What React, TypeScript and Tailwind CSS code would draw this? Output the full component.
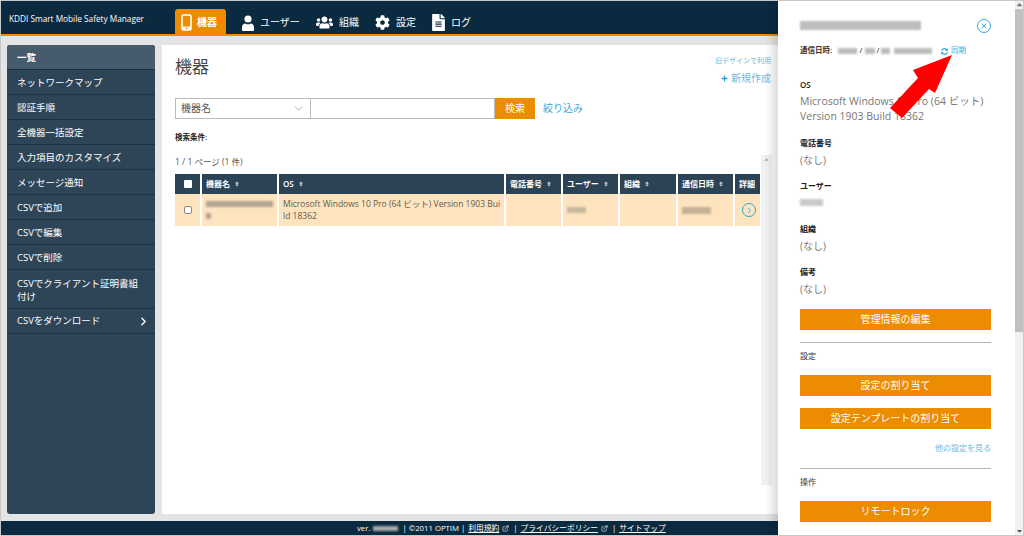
import { FaCog, FaFileAlt, FaUsers, FaPlus, FaSyncAlt, FaCaretUp, FaCaretDown, FaSort } from "react-icons/fa";
import { ChevronDown, ChevronRight, ExternalLink, X } from "lucide-react";

const font = "font-['Open_Sans','Noto_Sans_CJK_JP',sans-serif]";

const menu = [
  "ネットワークマップ",
  "認証手順",
  "全機器一括設定",
  "入力項目のカスタマイズ",
  "メッセージ通知",
  "CSVで追加",
  "CSVで編集",
  "CSVで削除",
];

function Blur({ className }: { className: string }) {
  return <div className={`blur-[1px] ${className}`} />;
}

function NavItem({ icon, label, className }: { icon: React.ReactNode; label: string; className: string }) {
  return (
    <div className={`flex items-center text-[10px] text-white ${className}`}>
      {icon}
      <span>{label}</span>
    </div>
  );
}

function Th({ label, w, sort = true }: { label: string; w: string; sort?: boolean }) {
  return (
    <th className={`${w} border-r-2 border-white pl-1 text-left text-[8px] font-semibold text-white last:border-r-0`}>
      <span className="flex items-center gap-1">
        {label}
        {sort && <FaSort className="size-[6px] text-[#d5dde3]" />}
      </span>
    </th>
  );
}

function Field({ label, value, blur }: { label: string; value?: string; blur?: boolean }) {
  return (
    <div className="mb-[11px] h-[32px]">
      <div className="h-[15px] text-[8px] leading-[15px] font-semibold text-[#222]">{label}</div>
      {blur ? (
        <Blur className="mt-[6px] h-[7px] w-[23px] bg-[#c9c9c9]" />
      ) : (
        <div className="mt-[2px] text-[10px] leading-[16px] text-[#777]">{value}</div>
      )}
    </div>
  );
}

function OrangeButton({ label, className }: { label: string; className: string }) {
  return (
    <div className={`flex h-[21px] items-center justify-center bg-[#ec8c00] text-[10px] text-white ${className}`}>
      {label}
    </div>
  );
}

export default function App() {
  return (
    <div className={`relative flex h-[536px] w-[1024px] overflow-hidden bg-[#e4e4e4] ${font}`}>
      <div className="flex w-[778px] shrink-0 flex-col">
        {/* header */}
        <header className="flex h-[36px] shrink-0 items-end border-b-2 border-[#ec8c00] bg-[#0a2a40] pl-[9px]">
          <div className="mb-[9px] w-[166px] text-[8.25px] text-white">KDDI Smart Mobile Safety Manager</div>
          <div className="flex h-[25px] w-[51px] items-center gap-[5px] rounded-t-[3px] bg-[#ec8c00] pt-[2px] pl-[6px] text-[10px] font-semibold text-white">
            <svg width="11" height="17" viewBox="0 0 11 17">
              <rect x="1" y="1" width="9" height="15" rx="1.5" fill="none" stroke="#fff" strokeWidth="1.6" />
              <rect x="1" y="12.5" width="9" height="3.5" fill="#fff" />
              <circle cx="5.5" cy="14.2" r="0.9" fill="#ec8c00" />
            </svg>
            機器
          </div>
          <div className="flex h-[26px] items-center pt-[3px] pl-[16px]">
            <NavItem
              className="w-[74px]"
              label="ユーザー"
              icon={
                <svg className="mr-[6px]" width="12" height="16" viewBox="0 0 12 16" fill="#fff">
                  <circle cx="6" cy="4" r="3.6" />
                  <path d="M0 15c0 .6.4 1 1 1h10c.6 0 1-.4 1-1v-3c0-2-1.6-3.6-3.4-3.6-.8.6-1.7.9-2.6.9s-1.8-.3-2.6-.9C1.6 8.4 0 10 0 12z" />
                </svg>
              }
            />
            <NavItem className="w-[59px]" label="組織" icon={<FaUsers className="mr-[6px] size-[17px]" />} />
            <NavItem className="w-[57px]" label="設定" icon={<FaCog className="mr-[6px] size-[15px]" />} />
            <NavItem className="w-[50px]" label="ログ" icon={<FaFileAlt className="mr-[6px] h-[17px] w-[13px]" />} />
          </div>
        </header>

        <div className="flex min-h-0 flex-1 gap-[7px] pt-[9px] pb-[7px] pl-[7px]">
          {/* sidebar */}
          <nav className="w-[148px] shrink-0 rounded-[3px] bg-[#2e4558] text-[9.5px] text-white">
            <div className="flex h-[25px] items-center rounded-t-[3px] border-b border-[#1c3244] bg-[#465c6d] pt-[2px] pl-[10px] font-semibold">一覧</div>
            {menu.map((m) => (
              <div key={m} className="flex h-[25px] items-center border-b border-[#1c3244] pt-[2px] pl-[10px]">{m}</div>
            ))}
            <div className="flex h-[39px] items-center border-b border-[#1c3244] pt-[2px] pr-3 pl-[10px] leading-[13px]">CSVでクライアント証明書組付け</div>
            <div className="flex h-[25px] items-center justify-between border-b border-[#1c3244] pr-[5px] pl-[10px]">
              CSVをダウンロード
              <ChevronRight className="size-[13px]" strokeWidth={2.5} />
            </div>
          </nav>

          {/* main */}
          <main className="flex min-w-0 flex-1 flex-col bg-white pt-[11px] pl-[13px]">
            <div className="flex h-[42px] items-start justify-between pr-[7px]">
              <h1 className="text-[17px] leading-[21px] text-[#444]">機器</h1>
              <div className="flex flex-col items-end text-[#6fb8de]">
                <span className="text-[7px] leading-[10px]">旧デザインで利用</span>
                <span className="mt-[6px] flex items-center gap-[3px] text-[10px] leading-[12px]">
                  <FaPlus className="size-[7px] text-[#2a9fd8]" />新規作成
                </span>
              </div>
            </div>
            <div className="flex h-[21px] items-stretch">
              <div className="flex w-[135px] items-center justify-between border-y border-l border-[#bbb] pr-[5px] pl-[5px] text-[10px] text-[#555]">
                機器名
                <ChevronDown className="size-[13px] text-[#999]" strokeWidth={1.5} />
              </div>
              <div className="w-[185px] border border-[#bbb] bg-white" />
              <div className="flex w-[40px] items-center justify-center bg-[#ec8c00] text-[10px] text-white">検索</div>
              <span className="ml-[8px] self-center text-[10px] text-[#3ba7d9]">絞り込み</span>
            </div>
            <div className="mt-[13px] text-[7.5px] leading-[10px] font-semibold text-[#222]">検索条件:</div>
            <div className="mt-[14px] text-[8.5px] leading-[11px] text-[#555]">1 / 1 ページ (1 件)</div>

            <div className="flex min-h-0 flex-1 items-start">
              <table className="mt-[7px] w-[585px] table-fixed border-collapse">
                <thead>
                  <tr className="h-[20px] bg-[#2c4356]">
                    <th className="w-[26px] border-r-2 border-white">
                      <span className="mx-auto block size-[8px] rounded-[1px] bg-white" />
                    </th>
                    <Th label="機器名" w="w-[77px]" />
                    <Th label="OS" w="w-[227px]" />
                    <Th label="電話番号" w="w-[57px]" />
                    <Th label="ユーザー" w="w-[57px]" />
                    <Th label="組織" w="w-[58px]" />
                    <Th label="通信日時" w="w-[57px]" />
                    <Th label="詳細" w="w-[26px]" sort={false} />
                  </tr>
                </thead>
                <tbody>
                  <tr className="h-[32px] bg-[#fde4bf]">
                    <td className="border-r-2 border-white">
                      <span className="mx-auto block size-[8px] rounded-[2px] border border-[#888] bg-white" />
                    </td>
                    <td className="border-r-2 border-white pl-1 align-middle">
                      <Blur className="h-[6px] w-[67px] bg-[#b3a591]" />
                      <Blur className="mt-[6px] h-[6px] w-[5px] bg-[#b3a591]" />
                    </td>
                    <td className="border-r-2 border-white pr-[2px] pl-1 text-[8.5px] leading-[12px] break-all text-[#665b4d]">
                      Microsoft Windows 10 Pro (64 ビット) Version 1903 Build 18362
                    </td>
                    <td className="border-r-2 border-white" />
                    <td className="border-r-2 border-white pl-1"><Blur className="h-[6px] w-[19px] bg-[#c9b79c]" /></td>
                    <td className="border-r-2 border-white" />
                    <td className="border-r-2 border-white pl-1"><Blur className="h-[7px] w-[29px] bg-[#c4b196]" /></td>
                    <td className="pl-[7px]">
                      <span className="flex size-[14px] items-center justify-center rounded-full border-[1.5px] border-[#2fa8dc] text-[#2fa8dc]">
                        <ChevronRight className="size-[9px]" strokeWidth={2.5} />
                      </span>
                    </td>
                  </tr>
                </tbody>
              </table>
              <div className="mt-[-12px] ml-[1px] flex h-[330px] w-[11px] justify-center bg-[#f1f1f1]">
                <FaCaretUp className="mt-[1px] size-[7px] text-[#aaa]" />
              </div>
            </div>
          </main>
        </div>

        {/* footer */}
        <footer className="flex h-[15px] shrink-0 items-center gap-[3px] bg-[#0a2a40] pl-[357px] text-[7.75px] whitespace-nowrap text-white">
          <span>ver.</span>
          <Blur className="h-[5px] w-[25px] bg-[#aaa]" />
          <span className="ml-[1px]">| ©2011 OPTIM |</span>
          <span className="underline">利用規約</span>
          <ExternalLink className="size-[7px]" />
          <span className="ml-[1px]">|</span>
          <span className="underline">プライバシーポリシー</span>
          <ExternalLink className="size-[7px]" />
          <span className="ml-[1px]">|</span>
          <span className="underline">サイトマップ</span>
        </footer>
      </div>

      {/* detail panel */}
      <aside className="flex min-w-0 flex-1 bg-white shadow-[-6px_0_8px_rgba(0,0,0,0.14)]">
        <div className="min-w-0 flex-1 pt-[21px] pl-[22px]">
          <div className="flex h-[9px] w-[191px] items-center justify-between">
            <Blur className="h-[9px] w-[121px] bg-[#bdbdbd]" />
            <span className="flex size-[14px] items-center justify-center rounded-full border-[1.5px] border-[#3aa9dd] text-[#3aa9dd]">
              <X className="size-[8px]" strokeWidth={3} />
            </span>
          </div>
          <div className="mt-[16px] flex h-[10px] items-center text-[7.5px] font-semibold text-[#333]">
            <span className="w-[38px]">通信日時:</span>
            <Blur className="h-[6px] w-[19px] bg-[#bbb]" />
            <span className="w-[8px] text-center text-[#555]">/</span>
            <Blur className="h-[6px] w-[10px] bg-[#bbb]" />
            <span className="w-[6px] text-center text-[#555]">/</span>
            <Blur className="h-[6px] w-[9px] bg-[#bbb]" />
            <Blur className="ml-[4px] h-[6px] w-[38px] bg-[#bbb]" />
            <FaSyncAlt className="ml-[9px] size-[7px] text-[#3aa9dd]" />
            <span className="ml-[3px] font-normal text-[#3aa9dd]">同期</span>
          </div>
          <div className="mt-[21px] h-[15px] text-[8px] leading-[15px] font-semibold text-[#222]">OS</div>
          <div className="mt-[2px] w-[191px] text-[10.5px] leading-[15px] text-[#777]">
            Microsoft Windows 10 Pro (64 ビット) Version 1903 Build 18362
          </div>
          <div className="mt-[11px]">
            <Field label="電話番号" value="(なし)" />
            <Field label="ユーザー" blur />
            <Field label="組織" value="(なし)" />
            <Field label="備考" value="(なし)" />
          </div>
          <div className="w-[191px] pt-[2px]">
            <OrangeButton label="管理情報の編集" className="" />
            <div className="mt-[12px] border-t border-[#b5b5b5]" />
            <div className="mt-[7px] text-[8px] leading-[11px] text-[#333]">設定</div>
            <OrangeButton label="設定の割り当て" className="mt-[14px]" />
            <OrangeButton label="設定テンプレートの割り当て" className="mt-[12px]" />
            <div className="mt-[13px] text-right text-[8px] leading-[11px] text-[#6fb8de]">他の設定を見る</div>
            <div className="mt-[15px] border-t border-[#b5b5b5]" />
            <div className="mt-[7px] text-[8px] leading-[11px] text-[#333]">操作</div>
            <OrangeButton label="リモートロック" className="mt-[14px]" />
          </div>
        </div>
        <div className="flex w-[9px] shrink-0 flex-col items-center bg-[#f1f1f1]">
          <FaCaretUp className="h-[9px] w-[7px] text-[#777]" />
          <div className="h-[323px] w-full bg-[#c1c1c1]" />
          <div className="flex-1" />
          <FaCaretDown className="mb-[1px] h-[8px] w-[7px] text-[#555]" />
        </div>
      </aside>

      {/* annotation arrow over the panel */}
      <svg className="absolute top-[50px] left-[885px]" width="72" height="72" viewBox="885 50 72 72">
        <polygon points="952,55 913,70 918,78 890,108 902,118 929,89 935,93" fill="#ff0000" />
      </svg>

      {/* window border */}
      <div className="pointer-events-none absolute inset-0 border border-[#c8c8c8]" />
    </div>
  );
}
